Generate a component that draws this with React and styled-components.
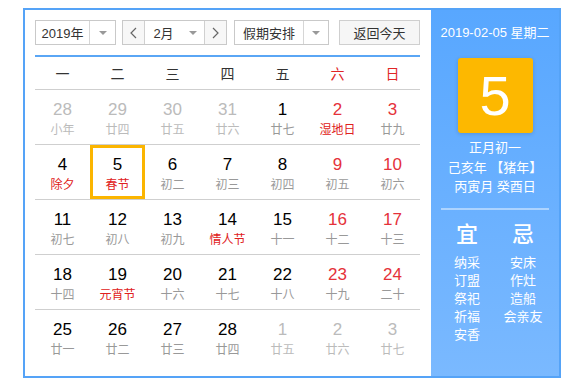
import React from "react";
import styled, { createGlobalStyle } from "styled-components";

const Global = createGlobalStyle`
  body {
    margin: 0;
    font-family: "Liberation Sans", "Noto Sans CJK SC", sans-serif;
    background: #fff;
  }
`;

const Box = styled.div`
  box-sizing: border-box;
  width: 538px;
  height: 370px;
  margin: 8px 0 0 23px;
  border: 2px solid #55a3f7;
  display: flex;
`;

const Main = styled.div`
  width: 406px;
  padding: 10px 11px 0 10px;
  box-sizing: border-box;
`;

const Toolbar = styled.div`
  display: flex;
  gap: 6px;
  height: 25px;
  padding-bottom: 10px;
  border-bottom: 2px solid #5aa6f5;
`;

const Select = styled.div`
  box-sizing: border-box;
  display: flex;
  width: ${({ w }) => w}px;
  height: 25px;
  border: 1px solid #c9c9c9;
  background: #fff;
  font-size: 13px;
  color: #333;
  margin-left: ${({ ml }) => ml || 0}px;
`;

const Label = styled.div`
  flex: 1;
  display: flex;
  align-items: center;
  justify-content: center;
`;

const Arrow = styled.div`
  width: ${({ w }) => w || 25}px;
  display: flex;
  align-items: center;
  justify-content: center;
  border-left: ${({ line }) => (line ? "1px solid #d6d6d6" : "none")};
  &::after {
    content: "";
    border-left: 4px solid transparent;
    border-right: 4px solid transparent;
    border-top: 4px solid #999;
  }
`;

const Step = styled.div`
  width: 21px;
  display: flex;
  align-items: center;
  justify-content: center;
  background: #f7f7f7;
  border-left: ${({ side }) => (side === "r" ? "1px solid #d0d0d0" : "none")};
  border-right: ${({ side }) => (side === "l" ? "1px solid #d0d0d0" : "none")};
`;

const Button = styled.div`
  box-sizing: border-box;
  width: 81px;
  height: 25px;
  margin-left: auto;
  border: 1px solid #cfcfcf;
  background: #f6f6f6;
  display: flex;
  align-items: center;
  justify-content: center;
  font-size: 13px;
  color: #333;
`;

const Grid = styled.div`
  display: grid;
  grid-template-columns: repeat(7, 55px);
`;

const Week = styled.div`
  height: 32px;
  display: flex;
  align-items: center;
  justify-content: center;
  font-size: 14px;
  color: ${({ red }) => (red ? "#e02626" : "#333")};
`;

const Cell = styled.div`
  border-top: 1px solid #cfcfcf;
  padding-top: 10px;
  height: 44px;
  text-align: center;
  box-shadow: ${({ on }) => (on ? "inset 0 0 0 3px #fbb500" : "none")};
`;

const Num = styled.div`
  font-size: 17px;
  line-height: 20px;
  color: ${({ tone }) =>
    tone === "off" ? "#bbb" : tone === "red" ? "#e5313a" : "#000"};
`;

const Lunar = styled.div`
  font-size: 12px;
  line-height: 20px;
  color: ${({ tone }) =>
    tone === "off" ? "#bbb" : tone === "red" ? "#e02020" : "#999"};
`;

const Side = styled.div`
  flex: 1;
  background: linear-gradient(#58a7ff, #7ab9ff);
  color: #fff;
  display: flex;
  flex-direction: column;
  align-items: center;
`;

const DateLine = styled.div`
  margin-top: 15px;
  font-size: 13px;
  line-height: 16px;
`;

const Today = styled.div`
  margin-top: 17px;
  width: 75px;
  height: 75px;
  border-radius: 3px;
  background: #fdb800;
  box-shadow: 0 1px 4px rgba(0, 0, 0, 0.15);
  display: flex;
  align-items: center;
  justify-content: center;
  font-size: 56px;
  font-family: "Liberation Sans", sans-serif;
`;

const Info = styled.div`
  margin-top: 5px;
  font-size: 13px;
  line-height: 19.5px;
  text-align: center;
`;

const Rule = styled.div`
  align-self: stretch;
  margin: 11px 10px 0;
  height: 2px;
  background: rgba(255, 255, 255, 0.45);
`;

const Almanac = styled.div`
  margin-top: 12px;
  display: grid;
  grid-template-columns: 56px 56px;
  text-align: center;
`;

const Col = styled.div`
  display: flex;
  flex-direction: column;
`;

const Big = styled.div`
  font-size: 22px;
  line-height: 26px;
  margin-bottom: 6px;
  font-weight: 500;
`;

const Item = styled.div`
  font-size: 13px;
  line-height: 18px;
`;

const Chevron = ({ dir }) => (
  <svg width="7" height="12" viewBox="0 0 7 12">
    <path
      d={dir === "l" ? "M6 1 L1 6 L6 11" : "M1 1 L6 6 L1 11"}
      fill="none"
      stroke="#666"
      strokeWidth="1.2"
    />
  </svg>
);

const weeks = ["一", "二", "三", "四", "五", "六", "日"];

const days = [
  ["28", "小年", "off"], ["29", "廿四", "off"], ["30", "廿五", "off"], ["31", "廿六", "off"],
  ["1", "廿七"], ["2", "湿地日", "w", "red"], ["3", "廿九", "w"],
  ["4", "除夕", "", "red"], ["5", "春节", "", "red", true], ["6", "初二"], ["7", "初三"],
  ["8", "初四"], ["9", "初五", "w"], ["10", "初六", "w"],
  ["11", "初七"], ["12", "初八"], ["13", "初九"], ["14", "情人节", "", "red"],
  ["15", "十一"], ["16", "十二", "w"], ["17", "十三", "w"],
  ["18", "十四"], ["19", "元宵节", "", "red"], ["20", "十六"], ["21", "十七"],
  ["22", "十八"], ["23", "十九", "w"], ["24", "二十", "w"],
  ["25", "廿一"], ["26", "廿二"], ["27", "廿三"], ["28", "廿四"],
  ["1", "廿五", "off"], ["2", "廿六", "off"], ["3", "廿七", "off"],
];

const yi = ["纳采", "订盟", "祭祀", "祈福", "安香"];
const ji = ["安床", "作灶", "造船", "会亲友"];

export default function App() {
  return (
    <>
      <Global />
      <Box>
        <Main>
          <Toolbar>
            <Select w={81}>
              <Label>2019年</Label>
              <Arrow line />
            </Select>
            <Select w={105}>
              <Step side="l"><Chevron dir="l" /></Step>
              <Label>2月</Label>
              <Arrow w={22} />
              <Step side="r"><Chevron dir="r" /></Step>
            </Select>
            <Select w={95} ml={1}>
              <Label>假期安排</Label>
              <Arrow w={24} line />
            </Select>
            <Button>返回今天</Button>
          </Toolbar>
          <Grid>
            {weeks.map((w, i) => (
              <Week key={w} red={i > 4}>{w}</Week>
            ))}
            {days.map(([n, l, t, lt, on], i) => (
              <Cell key={i} on={on}>
                <Num tone={t === "off" ? "off" : t === "w" ? "red" : ""}>{n}</Num>
                <Lunar tone={t === "off" ? "off" : lt}>{l}</Lunar>
              </Cell>
            ))}
          </Grid>
        </Main>
        <Side>
          <DateLine>2019-02-05 星期二</DateLine>
          <Today>5</Today>
          <Info>
            <div>正月初一</div>
            <div>己亥年 【猪年】</div>
            <div>丙寅月 癸酉日</div>
          </Info>
          <Rule />
          <Almanac>
            <Col>
              <Big>宜</Big>
              {yi.map((x) => <Item key={x}>{x}</Item>)}
            </Col>
            <Col>
              <Big>忌</Big>
              {ji.map((x) => <Item key={x}>{x}</Item>)}
            </Col>
          </Almanac>
        </Side>
      </Box>
    </>
  );
}
